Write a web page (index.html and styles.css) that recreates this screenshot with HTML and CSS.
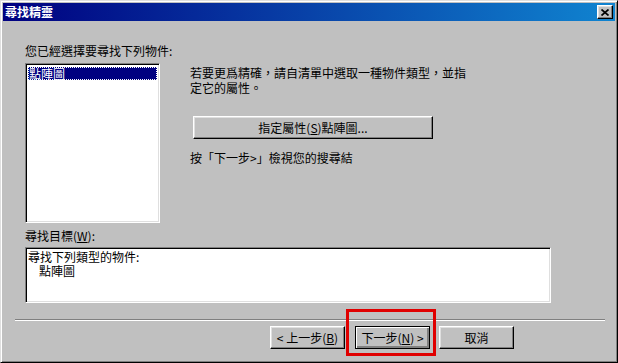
FILE: index.html
```html
<!DOCTYPE html>
<html lang="zh-Hant">
<head>
    <meta charset="UTF-8">
    <title>尋找精靈</title>
    <link rel="stylesheet" href="styles.css">
</head>
<body>

    <div class="window">
        <!-- Title bar -->
        <div class="titlebar">
            <span class="title">尋找精靈</span>
            <div class="close-btn">
                <svg width="8" height="7" viewBox="0 0 8 7">
                    <path d="M0.5 0.5 L7.5 6.5 M7.5 0.5 L0.5 6.5" stroke="#000" stroke-width="1.7" fill="none"/>
                </svg>
            </div>
        </div>

        <div class="content">
            <div class="label">您已經選擇要尋找下列物件:</div>

            <div class="top-row">
                <div class="listbox sunken">
                    <div class="list-item selected">點陣圖</div>
                </div>

                <div class="side">
                    <p class="desc">若要更爲精確，請自清單中選取一種物件類型，並指定它的屬性。</p>
                    <div class="btn wide-btn">指定屬性(<u>S</u>)點陣圖...</div>
                    <p class="hint">按「下一步&gt;」檢視您的搜尋結</p>
                </div>
            </div>

            <div class="label target-label">尋找目標(<u>W</u>):</div>
            <div class="target-box sunken">
                <div class="line">尋找下列類型的物件:</div>
                <div class="line indent">點陣圖</div>
            </div>
        </div>

        <div class="separator"></div>

        <div class="buttons">
            <div class="btn">&lt; 上一步(<u>B</u>)</div>
            <div class="next-wrap">
                <div class="btn default-btn">下一步(<u>N</u>) &gt;</div>
                <div class="highlight"></div>
            </div>
            <div class="btn">取消</div>
        </div>
    </div>

</body>
</html>
```

FILE: styles.css
```css
* {
    box-sizing: border-box;
}

body {
    margin: 0;
    font-family: "Noto Sans CJK TC", "Liberation Sans", sans-serif;
    font-size: 12px;
    color: #000;
    background-color: #c0c0c0;
}

.window {
    width: 618px;
    height: 363px;
    background-color: #c0c0c0;
    border: 1px solid;
    border-color: #dfdfdf #000 #000 #dfdfdf;
    box-shadow: inset 1px 1px #fff, inset -1px -1px #808080;
    padding: 2px;
}

.titlebar {
    height: 18px;
    background: linear-gradient(to right, #000080, #1084d0);
    display: flex;
    align-items: center;
    justify-content: space-between;
    padding: 0 2px 0 2px;
}

.title {
    color: #fff;
    font-weight: bold;
    font-size: 12px;
    line-height: 18px;
}

.close-btn {
    width: 16px;
    height: 14px;
    background-color: #c0c0c0;
    border: 1px solid;
    border-color: #fff #000 #000 #fff;
    box-shadow: inset -1px -1px #808080, inset 1px 1px #dfdfdf;
    display: flex;
    align-items: center;
    justify-content: center;
}

.close-btn svg {
    display: block;
}

.content {
    padding: 22px 0 0 22px;
}

.label {
    line-height: 15px;
    height: 15px;
}

.top-row {
    display: flex;
    margin-top: 5px;
}

.sunken {
    background-color: #fff;
    border: 1px solid;
    border-color: #808080 #fff #fff #808080;
    box-shadow: inset 1px 1px #000, inset -1px -1px #dfdfdf;
}

.listbox {
    width: 135px;
    height: 160px;
    padding: 3px 2px 2px 2px;
}

.list-item {
    height: 13px;
    line-height: 13px;
    padding-left: 1px;
}

.list-item.selected {
    background-color: #000080;
    color: #fff;
    outline: 1px dotted #fff;
    outline-offset: -1px;
}

.side {
    margin-left: 30px;
    padding-top: 2px;
}

.desc {
    width: 280px;
    margin: 0;
    line-height: 15px;
}

.btn {
    width: 75px;
    height: 23px;
    background-color: #c0c0c0;
    border: 1px solid;
    border-color: #fff #000 #000 #fff;
    box-shadow: inset -1px -1px #808080, inset 1px 1px #dfdfdf;
    display: flex;
    align-items: center;
    justify-content: center;
    line-height: 14px;
    white-space: nowrap;
}

.wide-btn {
    width: 240px;
    margin: 21px 0 0 3px;
}

.hint {
    margin: 11px 0 0 0;
    line-height: 15px;
}

.target-label {
    margin-top: 5px;
}

.target-box {
    width: 526px;
    height: 56px;
    margin-top: 4px;
    padding: 2px 2px 2px 2px;
}

.target-box .line {
    height: 14px;
    line-height: 14px;
}

.indent {
    padding-left: 11px;
}

.separator {
    margin: 16px 10px 0 12px;
    height: 2px;
    border-top: 1px solid #808080;
    border-bottom: 1px solid #fff;
}

.buttons {
    display: flex;
    margin: 5px 0 0 267px;
}

.next-wrap {
    position: relative;
    margin: 0 9px 0 10px;
}

.default-btn {
    border: 1px solid #000;
    box-shadow: inset 1px 1px #fff, inset -1px -1px #808080, inset -2px -2px #808080;
}

.highlight {
    position: absolute;
    left: -9px;
    top: -17px;
    width: 90px;
    height: 47px;
    border: 3px solid #e00000;
}
```
